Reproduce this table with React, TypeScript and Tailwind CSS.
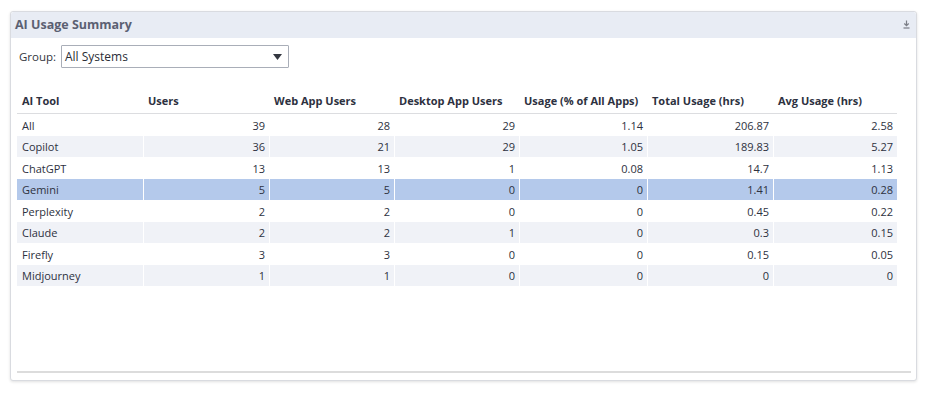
import React from "react";

const cols = [
  { label: "AI Tool", w: "w-[126px]" },
  { label: "Users", w: "w-[126px]" },
  { label: "Web App Users", w: "w-[125px]" },
  { label: "Desktop App Users", w: "w-[125px]" },
  { label: "Usage (% of All Apps)", w: "w-[128px]" },
  { label: "Total Usage (hrs)", w: "w-[126px]" },
  { label: "Avg Usage (hrs)", w: "w-[124px]" },
];

const rows: (string | number)[][] = [
  ["All", 39, 28, 29, 1.14, 206.87, 2.58],
  ["Copilot", 36, 21, 29, 1.05, 189.83, 5.27],
  ["ChatGPT", 13, 13, 1, 0.08, 14.7, 1.13],
  ["Gemini", 5, 5, 0, 0, 1.41, 0.28],
  ["Perplexity", 2, 2, 0, 0, 0.45, 0.22],
  ["Claude", 2, 2, 1, 0, 0.3, 0.15],
  ["Firefly", 3, 3, 0, 0, 0.15, 0.05],
  ["Midjourney", 1, 1, 0, 0, 0, 0],
];

export default function App() {
  return (
    <div
      className="w-[929px] h-[394px] bg-white pt-[11px] pl-[10px]"
      style={{ fontFamily: '"Open Sans", "Noto Sans", sans-serif' }}
    >
      <div className="w-[907px] h-[370px] border border-[#d9dbe0] rounded-[3px] shadow-[0_1px_3px_rgba(0,0,0,0.12)] flex flex-col bg-white">
        <div className="h-[26px] bg-[#e8ecf4] flex items-center justify-between pl-[4px] pr-[6px] rounded-t-[3px]">
          <span className="text-[12.5px] font-bold text-[#5b6072]">AI Usage Summary</span>
          <svg width="7" height="9" viewBox="0 0 7 9" className="mt-[-2px]">
            <path d="M3.5 0.5 V5.5 M1.3 3.5 L3.5 5.7 L5.7 3.5" stroke="#7a7d85" strokeWidth="1.2" fill="none" />
            <path d="M0.5 8 H6.5" stroke="#7a7d85" strokeWidth="1.2" />
          </svg>
        </div>
        <div className="flex-1 flex flex-col pl-[6px] pr-[5px]">
          <div className="flex items-center mt-[7px] ml-[2px] h-[23px]">
            <span className="w-[42px] text-[11.5px] text-[#333640]">Group:</span>
            <div className="w-[228px] h-[23px] border border-[#a9aeb8] flex items-center justify-between pl-[3px] pr-[6px] rounded-[1px]">
              <span className="text-[12px] text-[#2a2d36]">All Systems</span>
              <svg width="9" height="6" viewBox="0 0 9 6">
                <path d="M0 0 H9 L4.5 6 Z" fill="#343740" />
              </svg>
            </div>
          </div>
          <div className="mt-[22px] w-[880px] text-[11px] text-[#2d3140]">
            <div className="flex h-[24px] border-b border-[#dcdde0] items-center">
              {cols.map((c) => (
                <div key={c.label} className={`${c.w} pl-[5px] font-bold whitespace-nowrap`}>
                  {c.label}
                </div>
              ))}
            </div>
            {rows.map((r, i) => {
              const sel = i === 3;
              const bg = sel ? "bg-[#b4c9eb]" : i % 2 === 1 ? "bg-[#f0f2f7]" : "bg-white";
              return (
                <div key={i} className={`flex h-[21.5px] ${bg}`}>
                  {r.map((v, j) => (
                    <div
                      key={j}
                      className={`${cols[j].w} flex items-center pt-[2px] ${
                        j === 0 ? "pl-[5px]" : "justify-end pr-[4px] border-l border-white"
                      }`}
                    >
                      {v}
                    </div>
                  ))}
                </div>
              );
            })}
          </div>
          <div className="flex-1" />
          <div className="h-[2px] bg-[#dcdcdc] mb-[7px]" />
        </div>
      </div>
    </div>
  );
}
